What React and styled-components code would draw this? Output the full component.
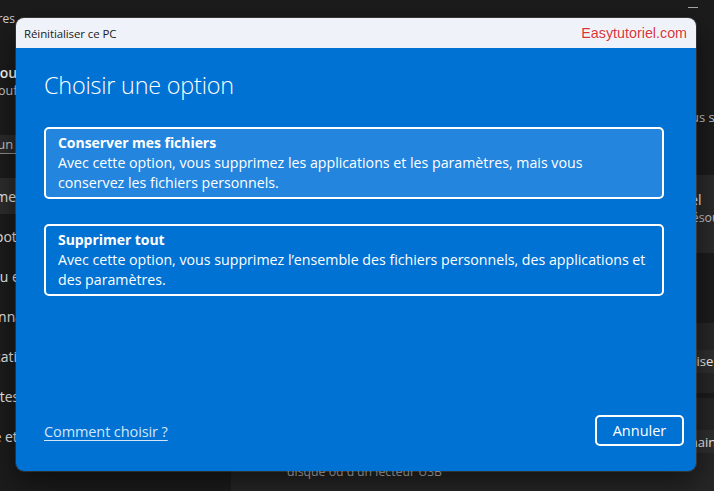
import React from "react";
import styled, { createGlobalStyle } from "styled-components";

const GlobalStyle = createGlobalStyle`
  html, body { margin: 0; padding: 0; background: #1c1c1c; }
  body { width: 714px; height: 491px; overflow: hidden; font-family: "Open Sans", "Noto Sans", sans-serif; }
  #root { width: 714px; height: 491px; overflow: hidden; }
  * { box-sizing: border-box; }
`;

const Stage = styled.div`
  position: relative;
  width: 714px;
  height: 491px;
  overflow: hidden;
  background: #1c1c1c;
`;

/* ---------- background Settings window ---------- */
const SettingsWindow = styled.div`
  display: flex;
  flex-direction: column;
  width: 908px;
  height: 100%;
  margin-left: -100px;
  color: #ffffff;
  font-family: "Open Sans", "Noto Sans", sans-serif;
`;

const WindowBar = styled.div`
  height: 36px;
  flex: none;
  display: flex;
  align-items: center;
  justify-content: space-between;
  padding-left: 14px;
`;

const AppTitle = styled.div`
  display: flex;
  align-items: center;
  gap: 20px;
  font-size: 12px;
  color: #d6d6d6;
`;

const AppIcon = styled.span`
  width: 16px;
  height: 16px;
  border-radius: 3px;
  background: #5a5a5a;
`;

const Controls = styled.div`
  align-self: flex-start;
  display: flex;
`;

const ControlButton = styled.div`
  width: 46px;
  height: 15px;
  display: flex;
  align-items: center;
  justify-content: center;
`;

const MinimizeGlyph = styled.span`
  width: 10px;
  height: 1px;
  background: #a8a8a8;
`;

const WindowBody = styled.div`
  flex: 1;
  display: flex;
  min-height: 0;
`;

const Sidebar = styled.nav`
  width: 315px;
  flex: none;
  display: flex;
  flex-direction: column;
  padding-left: 14px;
`;

const UserBlock = styled.div`
  display: flex;
  align-items: center;
  gap: 14px;
  margin-top: 14px;
`;

const Avatar = styled.span`
  width: 64px;
  height: 64px;
  border-radius: 50%;
  background: #3a3a3a;
`;

const UserText = styled.div`
  display: flex;
  flex-direction: column;
`;

const UserName = styled.span`
  font-size: 14px;
  font-weight: 600;
  line-height: 18px;
  white-space: nowrap;
`;

const UserMail = styled.span`
  font-size: 12.5px;
  line-height: 18px;
  color: #cfcfcf;
  white-space: nowrap;
`;

const SearchBox = styled.div`
  margin-top: 21px;
  width: 280px;
  height: 31px;
  display: flex;
  align-items: center;
  padding-left: 11px;
  background: #2c2c2c;
  border-radius: 4px;
  border-bottom: 1px solid #8e8e8e;
  font-size: 13px;
  color: #c8c8c8;
  white-space: nowrap;
`;

const NavList = styled.div`
  margin-top: 24px;
  display: flex;
  flex-direction: column;
  gap: 4px;
`;

const NavItem = styled.div`
  height: 36px;
  width: 290px;
  display: flex;
  align-items: center;
  padding-left: 47px;
  border-radius: 4px;
  font-size: 14px;
  color: #f0f0f0;
  white-space: nowrap;
  background: ${(p) => (p.$selected ? "#2d2d2d" : "transparent")};
`;

const Content = styled.main`
  flex: 1;
  min-width: 0;
  display: flex;
  flex-direction: column;
  padding: 20px 23px 0 16px;
`;

const PageTitle = styled.h2`
  margin: 0;
  font-size: 26px;
  font-weight: 600;
  line-height: 40px;
  white-space: nowrap;
`;

const PageText = styled.p`
  margin: 12px 0 0;
  font-size: 13px;
  line-height: 18px;
  color: #c8c8c8;
  white-space: nowrap;
`;

const Card = styled.div`
  margin-top: ${(p) => p.$gap}px;
  height: ${(p) => p.$h}px;
  flex: none;
  display: flex;
  align-items: ${(p) => (p.$top ? "flex-start" : "center")};
  gap: 20px;
  padding: ${(p) => p.$pad};
  background: ${(p) => p.$bg};
  border-radius: 4px;
`;

const CardIcon = styled.span`
  width: 20px;
  height: 20px;
  flex: none;
  border-radius: 3px;
  background: #4a4a4a;
`;

const CardText = styled.div`
  flex: 1;
  display: flex;
  flex-direction: column;
  min-width: 0;
`;

const CardTitle = styled.span`
  font-size: 13.9px;
  line-height: 18px;
  white-space: nowrap;
`;

const CardDesc = styled.span`
  font-size: 12.3px;
  line-height: ${(p) => p.$lh || 18}px;
  color: #c5c5c5;
  white-space: nowrap;
`;

const SectionLabel = styled.h3`
  margin: 36px 0 0;
  font-size: 14px;
  font-weight: 600;
  line-height: 20px;
`;

const CardButton = styled.span`
  flex: none;
  height: ${(p) => p.$h}px;
  display: flex;
  align-items: center;
  padding: 0 12px;
  border-radius: 4px;
  background: #2f2f2f;
  font-size: 13px;
  color: #f2f2f2;
  white-space: nowrap;
  align-self: ${(p) => p.$align || "center"};
  margin-top: ${(p) => p.$mt || 0}px;
  margin-right: ${(p) => p.$mr || 0}px;
`;

/* ---------- dialog ---------- */
const Dialog = styled.section`
  position: absolute;
  left: 16px;
  top: 18px;
  width: 680px;
  height: 453px;
  display: flex;
  flex-direction: column;
  border-radius: 8px;
  overflow: hidden;
  box-shadow: 0 0 0 1px rgba(255, 255, 255, 0.12), 0 10px 30px rgba(0, 0, 0, 0.55);
  font-family: "Open Sans", "Noto Sans", sans-serif;
`;

const DialogBar = styled.header`
  height: 30px;
  flex: none;
  display: flex;
  align-items: center;
  justify-content: space-between;
  padding: 0 9px 0 8px;
  background: #eff2f9;
`;

const DialogTitle = styled.span`
  font-size: 11.5px;
  color: #1b1b1b;
  letter-spacing: -0.1px;
`;

const Watermark = styled.span`
  font-family: "Liberation Sans", Arial, sans-serif;
  font-size: 14.3px;
  color: #d3363b;
  text-shadow: 0 0 1px #fff, 0 0 2px #fff, 0 0 2px #fff;
`;

const DialogBody = styled.div`
  flex: 1;
  display: flex;
  flex-direction: column;
  padding: 21px 12px 25px 28px;
  background: #0072d3;
  color: #ffffff;
`;

const Heading = styled.h1`
  margin: 0;
  font-size: 23.4px;
  font-weight: 300;
  line-height: 32px;
  letter-spacing: -0.2px;
`;

const Options = styled.div`
  margin: 26px 20px 0 0;
  display: flex;
  flex-direction: column;
  gap: 25px;
`;

const OptionCard = styled.button`
  display: flex;
  flex-direction: column;
  align-items: flex-start;
  padding: 4px 12px 4px;
  border: 2px solid #ffffff;
  border-radius: 5px;
  background: ${(p) => (p.$active ? "#2385dd" : "transparent")};
  color: #ffffff;
  font-family: inherit;
  text-align: left;
  cursor: pointer;
`;

const OptionTitle = styled.span`
  font-size: 14px;
  font-weight: 700;
  line-height: 20px;
  letter-spacing: -0.05px;
`;

const OptionText = styled.span`
  font-size: 14.2px;
  line-height: 20px;
  white-space: nowrap;
`;

const Footer = styled.footer`
  margin-top: auto;
  display: flex;
  align-items: center;
  justify-content: space-between;
`;

const HelpLink = styled.a`
  font-size: 14.5px;
  color: #d2e6f8;
  text-decoration: underline;
  text-underline-offset: 3px;
  letter-spacing: -0.1px;
  margin-top: 2px;
`;

const CancelButton = styled.button`
  width: 89px;
  height: 31px;
  border: 2px solid #ffffff;
  border-radius: 5px;
  background: transparent;
  color: #ffffff;
  font-family: inherit;
  font-size: 14.5px;
  cursor: pointer;
`;

const navItems = [
  "Système",
  "Bluetooth et appareils",
  "Réseau et Internet",
  "Personnalisation",
  "Applications",
  "Comptes",
  "Heure et langue",
  "Jeux",
];

export default function App() {
  return (
    <>
      <GlobalStyle />
      <Stage>
        <SettingsWindow>
          <WindowBar>
            <AppTitle>
              <AppIcon />
              <span>Paramètres</span>
            </AppTitle>
            <Controls>
              <ControlButton>
                <MinimizeGlyph />
              </ControlButton>
              <ControlButton />
              <ControlButton />
            </Controls>
          </WindowBar>
          <WindowBody>
            <Sidebar>
              <UserBlock>
                <Avatar />
                <UserText>
                  <UserName>Soufiane Benali</UserName>
                  <UserMail>soufiane@outlook.fr</UserMail>
                </UserText>
              </UserBlock>
              <SearchBox>Rechercher un paramètre</SearchBox>
              <NavList>
                {navItems.map((label, i) => (
                  <NavItem key={label} $selected={i === 0}>
                    {label}
                  </NavItem>
                ))}
              </NavList>
            </Sidebar>
            <Content>
              <PageTitle>Système  ›  Récupération</PageTitle>
              <PageText>
                Si vous rencontrez des problèmes avec votre PC ou des applications ou si vous souhaitez le réinitialiser, ces options peuvent vous aider.
              </PageText>
              <Card $gap={49} $h={78} $pad="0 16px 11px" $bg="#2b2b2b">
                <CardIcon />
                <CardText>
                  <CardTitle>Résoudre les problèmes sans réinitialiser le PC via l'outil manuel</CardTitle>
                  <CardDesc>
                    La réinitialisation peut prendre un certain temps ; essayez d'abord de résoudre les problèmes
                  </CardDesc>
                </CardText>
              </Card>
              <SectionLabel>Options de récupération</SectionLabel>
              <Card $gap={14} $h={70} $pad="0 16px" $bg="#272727">
                <CardIcon />
                <CardText>
                  <CardTitle>Réinitialiser ce PC</CardTitle>
                  <CardDesc>Choisissez de conserver ou de supprimer vos fichiers personnels</CardDesc>
                </CardText>
                <CardButton $h={23} $mt={6} $mr={5}>Réinitialiser le PC</CardButton>
              </Card>
              <Card $gap={5} $h={130} $pad="26px 16px" $bg="#262626" $top>
                <CardIcon />
                <CardText>
                  <CardTitle>Démarrage avancé</CardTitle>
                  <CardDesc $lh={20}>Modifiez les paramètres de démarrage, notamment à partir d'un</CardDesc>
                  <CardDesc $lh={20}>disque ou d'un lecteur USB</CardDesc>
                </CardText>
                <CardButton $h={23} $align="flex-start" $mt={6} $mr={1}>
                  Redémarrer maintenant
                </CardButton>
              </Card>
            </Content>
          </WindowBody>
        </SettingsWindow>

        <Dialog>
          <DialogBar>
            <DialogTitle>Réinitialiser ce PC</DialogTitle>
            <Watermark>Easytutoriel.com</Watermark>
          </DialogBar>
          <DialogBody>
            <Heading>Choisir une option</Heading>
            <Options>
              <OptionCard $active>
                <OptionTitle>Conserver mes fichiers</OptionTitle>
                <OptionText>
                  Avec cette option, vous supprimez les applications et les paramètres, mais vous
                </OptionText>
                <OptionText>conservez les fichiers personnels.</OptionText>
              </OptionCard>
              <OptionCard>
                <OptionTitle>Supprimer tout</OptionTitle>
                <OptionText>
                  Avec cette option, vous supprimez l’ensemble des fichiers personnels, des applications et
                </OptionText>
                <OptionText>des paramètres.</OptionText>
              </OptionCard>
            </Options>
            <Footer>
              <HelpLink href="#">Comment choisir ?</HelpLink>
              <CancelButton>Annuler</CancelButton>
            </Footer>
          </DialogBody>
        </Dialog>
      </Stage>
    </>
  );
}
